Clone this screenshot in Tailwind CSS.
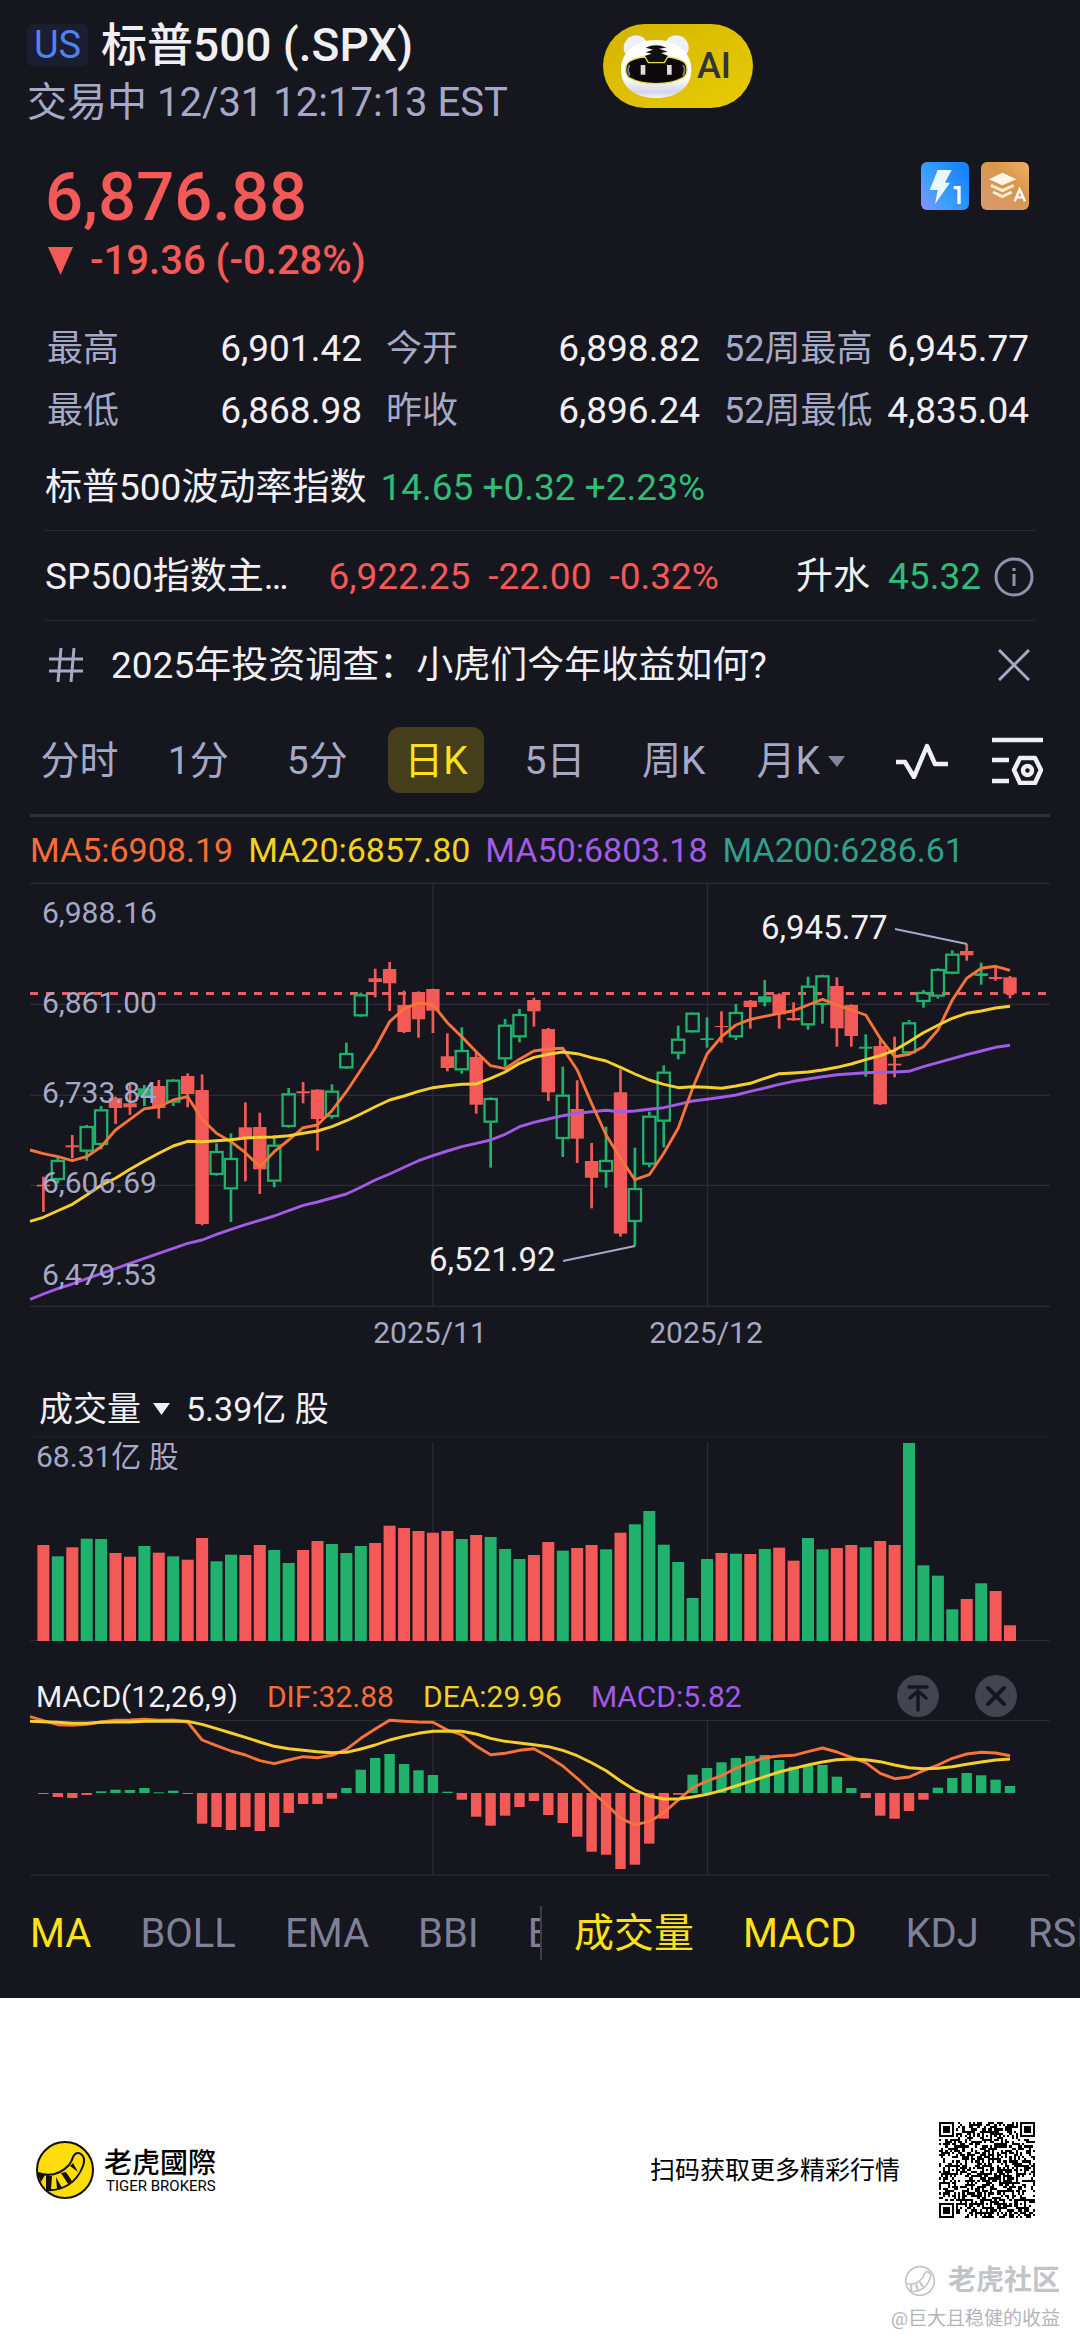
<!DOCTYPE html>
<html lang="zh-CN">
<head>
<meta charset="utf-8">
<meta name="viewport" content="width=device-width, initial-scale=1">
<title>标普500 (.SPX)</title>
<script src="https://cdn.jsdelivr.net/npm/@tailwindcss/browser@4"></script>
</head>
<body class="bg-white font-['Roboto','Noto_Sans_CJK_SC',sans-serif] text-[#f0f0f4]">
<main class="bg-[#16161e] overflow-hidden">

  <!-- Title bar -->
  <header class="grid grid-cols-[576fr_477fr] pt-[15px] pl-[27px]">
    <div>
      <h1 class="flex h-[60px] items-center gap-[13px] whitespace-nowrap text-[46px] font-medium">
        <span class="flex h-[42px] w-[61px] items-center justify-center rounded-md bg-[#1a1e30] text-[38px] font-normal text-[#4f82f0]">US</span>
        <span>标普500 (.SPX)</span>
      </h1>
      <p class="h-14 whitespace-nowrap text-[40px] leading-[56px] text-[#a6a9c6]">交易中 12/31 12:17:13 EST</p>
    </div>
    <button class="mt-[9px] flex h-[84px] w-[150px] items-center gap-1 rounded-full bg-gradient-to-br from-[#d3b400] to-[#e8cc06] pl-4 text-[36px] font-medium text-[#343434]">
      <svg class="h-[66px] w-[74px] shrink-0" viewBox="70 56 222 198" aria-hidden="true">
        <defs><linearGradient id="face" x1="0" y1="0" x2="0" y2="1"><stop offset=".65" stop-color="#fff"/><stop offset=".9" stop-color="#d4d5ea"/><stop offset="1" stop-color="#f4f4fb"/></linearGradient></defs>
        <circle cx="121" cy="100" r="37" fill="#eef0fa"/><circle cx="242" cy="100" r="37" fill="#eef0fa"/>
        <path d="M181 77C245 77 287 115 287 166C287 221 240 251 181 251S76 221 76 166C76 115 117 77 181 77Z" fill="url(#face)"/>
        <path d="M150 100Q180 86 212 100L190 103L216 112L196 116L218 125L206 145H158L146 125L168 118L150 114L172 106Z" fill="#111"/>
        <path d="M100 142Q125 128 148 128L158 145H206L216 128Q242 130 264 142Q274 150 274 166Q274 182 262 190Q230 208 181 208T100 190Q90 182 90 166Q90 150 100 142Z" fill="#0c0809" stroke="#e6dc50" stroke-width="4"/>
        <path d="M102 152Q92 166 102 184M262 152Q272 166 262 184" fill="none" stroke="#77738c" stroke-width="6"/>
        <path d="M135 152h14v29h-14zM214 152h14v29h-14z" fill="#dcdce2"/>
      </svg>
      AI
    </button>
  </header>

  <!-- Last price -->
  <section class="mt-[26px] flex justify-between pl-[45px] pr-[51px] text-[#f35a57]">
    <div>
      <p class="h-20 text-[67px] font-medium leading-[80px]">6,876.88</p>
      <p class="flex h-12 items-center gap-[17px] whitespace-nowrap text-[40px] font-medium">
        <svg class="ml-[3px] h-7 w-[25px]" viewBox="0 0 25 28" aria-hidden="true"><path d="M0 0H25L12.500 28Z" fill="#f35a57"/></svg>
        -19.36 (-0.28%)
      </p>
    </div>
    <div class="mt-[5px] flex gap-3">
      <svg class="size-12" viewBox="0 0 144 144" role="img" aria-label="Level 1">
        <defs><linearGradient id="lv" x1="0" y1="1" x2="1" y2=".3"><stop stop-color="#8a90ff"/><stop offset=".4" stop-color="#3fa0ff"/><stop offset="1" stop-color="#1684fb"/></linearGradient></defs>
        <rect width="144" height="144" rx="18" fill="url(#lv)"/>
        <path d="M50 24H92L72 62H87L42 126L50 84H26Z" fill="#e9f7ff"/>
        <path d="M98 72H119V126H109V82H98Z" fill="#fff"/>
      </svg>
      <svg class="size-12" viewBox="0 0 144 144" role="img" aria-label="Depth A">
        <defs><linearGradient id="dp" x1="0" y1="1" x2="1" y2="0"><stop stop-color="#d99a78"/><stop offset=".6" stop-color="#d8974c"/><stop offset="1" stop-color="#efb066"/></linearGradient></defs>
        <rect width="144" height="144" rx="18" fill="url(#dp)"/>
        <path d="M64 32L106 52L64 70L24 52Z" fill="#fff8ea"/>
        <path d="M30 70L64 86L98 70M36 90L64 104L92 90" fill="none" stroke="#fdebd0" stroke-width="9"/>
        <path d="M101 118L116 82L132 118M107 106H126" fill="none" stroke="#fff" stroke-width="7"/>
      </svg>
    </div>
  </section>

  <!-- Key figures -->
  <dl class="mt-[33px] grid grid-cols-[315fr_314fr_305fr] gap-x-6 whitespace-nowrap pl-[47px] pr-[51px] text-[37px] leading-[62px] [&_dt]:text-[36px] [&_dt]:text-[#a6a9c6] [&>div]:flex [&>div]:justify-between">
    <div><dt>最高</dt><dd>6,901.42</dd></div>
    <div><dt>今开</dt><dd>6,898.82</dd></div>
    <div><dt>52周最高</dt><dd>6,945.77</dd></div>
    <div><dt>最低</dt><dd>6,868.98</dd></div>
    <div><dt>昨收</dt><dd>6,896.24</dd></div>
    <div><dt>52周最低</dt><dd>4,835.04</dd></div>
  </dl>

  <!-- Related instruments -->
  <section class="mt-0.5 whitespace-nowrap px-[45px] text-[37px]">
    <div class="flex h-[86px] items-center gap-[14px] pt-0.5">
      <span>标普500波动率指数</span><span class="text-[#2fbd78]">14.65 +0.32 +2.23%</span>
    </div>
    <div class="flex h-[91px] items-center border-y border-[#2c2c36] pt-0.5">
      <span>SP500指数主…</span>
      <span class="ml-10 flex gap-[18px] text-[#f35a57]"><span>6,922.25</span><span>-22.00</span><span>-0.32%</span></span>
      <span class="ml-auto">升水</span>
      <span class="ml-[18px] text-[#2fbd78]">45.32</span>
      <button class="ml-[13px] mr-px" aria-label="说明">
        <svg class="size-10" viewBox="0 0 40 40" fill="none" stroke="#8f92ac" stroke-width="3"><circle cx="20" cy="20" r="18"/><path d="M20 17V29M20 11V14"/></svg>
      </button>
    </div>
    <div class="flex h-[88px] items-center">
      <svg class="ml-1 size-[34px]" viewBox="0 0 34 34" fill="none" stroke="#a6a9c6" stroke-width="3" aria-hidden="true"><path d="M0 11H34M0 23H34M12 0L9 34M25 0L22 34"/></svg>
      <a href="#" class="ml-[28px] pt-0.5">2025年投资调查：小虎们今年收益如何?</a>
      <button class="ml-auto mr-[5px]" aria-label="关闭">
        <svg class="size-8" viewBox="0 0 32 32" fill="none" stroke="#a6a9c6" stroke-width="3"><path d="M1 1L31 31M31 1L1 31"/></svg>
      </button>
    </div>
  </section>

  <!-- Period tabs -->
  <nav class="mt-[18px] grid grid-cols-[repeat(7,119fr)_140fr_50fr] justify-items-center whitespace-nowrap pl-5 pr-[37px] text-[39px] text-[#a6a9c6] [&>button]:h-[66px] [&>button]:pt-0.5">
    <button>分时</button>
    <button>1分</button>
    <button>5分</button>
    <button class="w-24 rounded-xl bg-[#453e1b] text-[#ffe11a]">日K</button>
    <button>5日</button>
    <button>周K</button>
    <button class="flex items-center gap-2 pl-4">月K<svg class="h-[11px] w-[17px]" viewBox="0 0 17 11" aria-hidden="true"><path d="M0 0H17L9 11Z" fill="#84869c"/></svg></button>
    <button class="flex items-center" aria-label="分析"><svg class="h-9 w-[54px]" viewBox="0 0 54 36" fill="none" stroke="#f0f0f4" stroke-width="4.500" stroke-linejoin="round"><path d="M1 19H10L19 34L32 3L40 21H53"/></svg></button>
    <button class="flex items-center" aria-label="图表设置"><svg class="h-12 w-[51px]" viewBox="0 0 51 48" fill="none" stroke="#f0f0f4" stroke-width="4.500"><path d="M0 3H51M0 23H17M0 44H17"/><path d="M28 21H43L49 33L43 46H28L22 33Z" stroke-linejoin="round"/><circle cx="35.500" cy="33.500" r="4.500"/></svg></button>
  </nav>
  <hr class="mx-[30px] mt-[21px] border-t-3 border-[#303036]">

  <p class="flex h-[65px] items-center gap-[15px] whitespace-nowrap pl-[30px] pt-px text-[34px]">
    <span class="text-[#f66d36]">MA5:6908.19</span><span class="text-[#f2d21f]">MA20:6857.80</span><span class="text-[#a35ae6]">MA50:6803.18</span><span class="text-[#2fa08a]">MA200:6286.61</span>
  </p>

  <!-- Price chart -->
  <svg id="price" class="block w-full" viewBox="0 12 1080 468" role="img" aria-label="日K线"></svg>

  <!-- Volume -->
  <div class="mt-[30px] flex h-14 items-center whitespace-nowrap pl-[39px] pt-0.5 text-[34px]">
    <button class="flex items-center gap-3">成交量<svg class="h-3 w-[17px]" viewBox="0 0 17 12" aria-hidden="true"><path d="M0 0H17L8.500 12Z" fill="#f0f0f4"/></svg></button>
    <span class="ml-4">5.39亿 股</span>
  </div>
  <svg id="volume" class="block w-full" viewBox="0 56 1080 208" role="img" aria-label="成交量"></svg>

  <!-- MACD -->
  <div class="mt-[30px] flex h-11 items-center gap-[29px] whitespace-nowrap pl-[36px] pr-[63px] text-[30px]">
    <span>MACD(12,26,9)</span><span class="text-[#f66d36]">DIF:32.88</span><span class="text-[#f2d21f]">DEA:29.96</span><span class="text-[#a35ae6]">MACD:5.82</span>
    <button class="ml-auto" aria-label="上移"><svg class="size-[42px]" viewBox="0 0 42 42"><circle cx="21" cy="21" r="21" fill="#424450"/><path d="M12 12H30M21 35V17M13 23L21 16L29 23" fill="none" stroke="#16161e" stroke-width="3.500" stroke-linecap="round"/></svg></button>
    <button class="ml-[7px]" aria-label="移除"><svg class="size-[42px]" viewBox="0 0 42 42"><circle cx="21" cy="21" r="21" fill="#424450"/><path d="M13 13L29 29M29 13L13 29" fill="none" stroke="#16161e" stroke-width="4" stroke-linecap="round"/></svg></button>
  </div>
  <svg id="macd" class="block w-full overflow-visible" viewBox="0 338 1080 162" role="img" aria-label="MACD"></svg>

  <!-- Indicator tabs -->
  <nav class="mb-3 flex h-[106px] items-center text-[40px] text-[#7f8199]">
    <div class="flex w-1/2 shrink-0 gap-[49px] overflow-hidden whitespace-nowrap pl-[30px] pt-0.5">
      <button class="text-[#ffe11a]">MA</button><button>BOLL</button><button>EMA</button><button>BBI</button><button>E</button>
    </div>
    <div class="h-[54px] w-0.5 shrink-0 bg-[#3c3d4a]"></div>
    <div class="flex flex-1 gap-[49px] overflow-hidden whitespace-nowrap pl-8 pt-0.5">
      <button class="text-[#ffe11a]">成交量</button><button class="text-[#ffe11a]">MACD</button><button>KDJ</button><button>RSI</button>
    </div>
  </nav>
</main>

<footer class="pt-[124px] pb-[9px] text-black">
  <div class="flex h-24 items-center pl-[36px] pr-[45px]">
    <svg class="size-[58px]" viewBox="0 0 58 58" aria-hidden="true">
      <circle cx="29" cy="29" r="28" fill="#ffdd0a" stroke="#111" stroke-width="2"/>
      <path d="M2 32Q20 38 33 24Q36 20 37 16Q40 10 45 13Q50 17 47 25Q42 38 32 44Q22 50 10 49" fill="#ffdd0a" stroke="#111" stroke-width="2"/>
      <path d="M1 32L9 34L5 41ZM10 34L16 35L15 49H10ZM20 36L26 47L21 48ZM25 32L30 31L36 40L32 43ZM34 25L37 22L42 31Z" fill="#111"/>
    </svg>
    <div class="ml-2.5 whitespace-nowrap">
      <p class="font-['Noto_Sans_CJK_TC',sans-serif] text-[28px] font-medium leading-8">老虎國際</p>
      <p class="pl-0.5 text-[15px] leading-[18px]">TIGER BROKERS</p>
    </div>
    <p class="ml-auto whitespace-nowrap pt-0.5 text-[25px]">扫码获取更多精彩行情</p>
    <svg id="qr" class="ml-[39px] size-24" viewBox="0 0 45 45" shape-rendering="crispEdges" role="img" aria-label="二维码"></svg>
  </div>
  <div class="mt-[43px] flex flex-col items-end whitespace-nowrap pr-5 text-[#c3c4ca]">
    <p class="flex h-10 items-center gap-3 text-[28px] font-bold">
      <svg class="size-8" viewBox="0 0 58 58" fill="none" stroke="#c3c4ca" stroke-width="3" aria-hidden="true"><circle cx="29" cy="29" r="26"/><path d="M4 33Q20 39 33 24Q36 20 37 16Q40 10 45 13Q50 17 47 25Q42 38 32 44Q22 50 10 47"/><path d="M13 36V46M22 35L25 45M29 31L34 40" stroke-width="4"/></svg>
      老虎社区
    </p>
    <p class="mt-[3px] h-[30px] text-[19px] leading-[30px] text-[#b4b5bc]">@巨大且稳健的收益</p>
  </div>
</footer>

<script>
const RED = '#f35a57', GREEN = '#20b26c', GRID = '#2b2c34', MUTED = '#a6a9c6';
const STEP = 14.427, X0 = 43.4, THIRD = 3;
const cx = i => X0 + i * STEP;
const y = v => v / THIRD;
const rect = (x, t, w, h, f) => `<rect x="${x.toFixed(1)}" y="${t.toFixed(1)}" width="${w}" height="${Math.max(h, 1).toFixed(1)}" fill="${f}"/>`;
const line = (x1, y1, x2, y2, c, w = 1, extra = '') => `<line x1="${x1}" y1="${y1}" x2="${x2}" y2="${y2}" stroke="${c}" stroke-width="${w}" ${extra}/>`;
const curve = (vals, c) => `<polyline fill="none" stroke="${c}" stroke-width="2.9" stroke-linejoin="round" points="${vals.map((v, i) => (i ? cx(i - 1) : 30).toFixed(1) + ',' + y(v).toFixed(1)).join(' ')}"/>`;
const label = (x, b, t, size, c, anchor = 'start') => `<text x="${x}" y="${b}" font-size="${size}" fill="${c}" text-anchor="${anchor}">${t}</text>`;
const MONTHS = [433, 707.5];

// colour, high, body top, body bottom, low, volume top
const days = `R 920 944 949 1026 495|G 862 870 930 940 529|R 795 826 832 865 502|G 765 768 845 872 476|G 708 718 825 838 477|R 680 684 714 762 519|R 640 700 712 735 530|G 645 655 680 708 498|R 630 648 714 746 518|G 627 629 698 708 529|R 610 618 672 712 539|R 613 660 1062 1066 474|G 820 843 915 917 544|G 790 864 958 1056 524|R 697 772 804 934 525|R 728 771 898 972 495|G 795 824 935 952 510|G 654 670 771 773 549|R 636 664 670 700 510|R 658 659 747 842 483|G 643 662 741 746 492|G 518 549 595 597 519|G 368 373 439 441 498|R 296 325 336 382 489|R 276 297 340 423 437|R 362 405 486 489 444|R 364 366 448 503 453|R 356 357 422 489 458|R 490 559 594 604 453|G 472 540 601 611 477|R 545 561 704 731 465|G 682 684 758 893 471|G 447 464 568 590 507|G 417 432 502 517 537|R 383 390 424 470 525|R 474 477 667 693 486|G 590 674 807 861 512|R 631 717 806 879 504|R 819 873 923 1015 495|G 770 870 906 953 508|R 598 667 1091 1100 458|G 833 954 1056 1127 433|G 725 737 884 892 393|G 586 605 755 832 494|G 467 506 551 568 546|G 427 428 487 488 654|G 442 505 510 533 537|R 424 468 471 518 519|G 402 426 502 510 521|R 390 392 411 476 522|G 330 379 397 409 507|R 370 373 433 476 503|R 397 444 451 452 542|G 320 347 466 479 474|G 314 316 405 461 508|R 322 348 475 530 504|R 403 405 498 530 495|G 493 530 536 620 502|R 510 528 703 705 483|R 500 581 586 622 495|G 450 457 550 552 189|G 360 366 396 413 556|G 295 297 380 386 587|G 241 251 311 313 688|R 222 243 256 272 657|G 278 310 318 344 610|R 293 321 327 332 633|R 318 322 371 385 736`
  .split('|').map(s => { const p = s.split(' '); return [p[0], ...p.slice(1).map(Number)]; });

const ma5 = [840,851,860,872,860,830,780,748,716,710,690,680,748,790,815,848,890,845,810,773,765,722,665,600,535,455,416,399,404,458,500,545,587,596,568,543,537,535,600,700,795,865,929,914,850,775,655,552,500,465,448,439,430,422,405,388,405,420,435,505,560,553,530,480,390,325,295,289,301];
const ma20 = [1054,1042,1022,1003,975,946,925,898,873,850,828,814,815,812,809,804,802,801,797,790,783,770,752,732,710,690,678,664,653,647,643,642,625,606,580,562,553,546,551,563,573,592,612,630,643,653,650,652,655,648,640,625,611,609,606,600,592,582,569,557,541,515,488,466,445,430,423,414,409];
const ma50 = [1288,1272,1256,1242,1226,1211,1196,1180,1165,1150,1135,1120,1110,1093,1078,1064,1051,1038,1022,1006,996,984,972,952,930,912,892,872,857,843,830,820,810,793,770,757,747,737,730,725,721,725,723,718,713,703,693,688,682,675,664,654,643,634,627,620,614,611,608,607,606,604,590,578,566,554,543,532,526];

let s = '';
for (const v of [40, 403, 676, 946, 1309]) s += line(30, y(v), 1050, y(v), GRID, 1.3);
for (const x of MONTHS) s += line(x, y(40), x, y(1309), GRID, 1.3);
s += line(30, 123.5, 1047, 123.5, '#e8605f', 2.8, 'stroke-dasharray="8 8"');
days.forEach(([c, h, t, b, l], i) => {
  const x = cx(i), col = c === 'R' ? RED : GREEN;
  if (c === 'R' || b - t < 28) {
    s += line(x, y(h), x, y(l), col, 2.7) + rect(x - 6.7, y(t), 13.4, y(b - t), col);
  } else {
    s += line(x, y(h), x, y(t), col, 2.7) + line(x, y(b), x, y(l), col, 2.7);
    s += `<rect x="${x - 6.1}" y="${y(t) + 1}" width="12.2" height="${y(b - t) - 2}" fill="none" stroke="${col}" stroke-width="2.3"/>`;
  }
});
s += curve(ma50, '#a35ae6') + curve(ma5, '#f6733a') + curve(ma20, '#f5cf2c');
[['6,988.16', 158], ['6,861.00', 429], ['6,733.84', 700], ['6,606.69', 970], ['6,479.53', 1244]].forEach(([t, v]) => s += label(42, y(v), t, 30, MUTED));
s += line(895, 59, 967, 74, MUTED, 2) + label(761, 69, '6,945.77', 33, '#f0f0f4');
s += line(563, 391, 635, 376, MUTED, 2) + label(429, 401, '6,521.92', 33, '#f0f0f4');
s += label(430, 472.5, '2025/11', 30, MUTED, 'middle') + label(706, 472.5, '2025/12', 30, MUTED, 'middle');
document.getElementById('price').innerHTML = s;

s = line(30, 57, 1050, 57, '#202129') + line(30, 260.5, 1050, 260.5, GRID);
for (const x of MONTHS) s += line(x, 62, x, 260, GRID, 1.3);
days.forEach((d, i) => s += rect(cx(i) - 6, y(d[5]), 12, y(783 - d[5]), d[0] === 'R' ? RED : GREEN));
s += label(36, 87, '68.31亿 股', 30, MUTED);
document.getElementById('volume').innerHTML = s;

const hist = [1242,1251,1254,1245,1234,1229,1230,1224,1237,1232,1241,1331,1341,1350,1341,1353,1341,1299,1272,1272,1256,1224,1169,1134,1122,1152,1171,1185,1235,1259,1310,1337,1307,1281,1263,1305,1329,1370,1415,1424,1467,1454,1391,1316,1244,1184,1164,1147,1134,1128,1125,1140,1160,1158,1155,1190,1224,1254,1307,1316,1293,1259,1223,1194,1179,1186,1199,1218];
const dif = [1010,1022,1034,1036,1033,1026,1021,1020,1018,1021,1020,1026,1080,1097,1113,1125,1142,1151,1140,1130,1133,1126,1108,1075,1047,1021,1024,1026,1027,1050,1065,1098,1124,1120,1111,1106,1130,1158,1195,1235,1272,1315,1334,1325,1298,1260,1223,1203,1187,1165,1148,1133,1128,1126,1115,1104,1116,1132,1148,1180,1196,1191,1172,1155,1135,1122,1117,1119,1127];
const dea = [1024,1025,1027,1030,1030,1027,1026,1026,1024,1024,1024,1024,1033,1046,1059,1072,1086,1099,1106,1111,1115,1118,1117,1107,1095,1080,1069,1060,1054,1053,1054,1062,1075,1084,1089,1094,1100,1111,1127,1148,1172,1203,1230,1248,1257,1257,1251,1243,1232,1218,1204,1190,1176,1165,1155,1146,1139,1137,1139,1145,1155,1163,1166,1165,1160,1153,1146,1140,1137];
s = line(30, 340.5, 1050, 340.5, GRID) + line(30, 495, 1050, 495, GRID);
for (const x of MONTHS) s += line(x, 340, x, 495, GRID, 1.3);
hist.forEach((v, i) => s += rect(cx(i) - 5.2, y(Math.min(v, 1239)), 10.4, y(Math.abs(v - 1239)), v > 1239 ? RED : GREEN));
s += curve(dif, '#f6733a') + curve(dea, '#f5cf2c');
document.getElementById('macd').innerHTML = s;

// Version 7 code: 45 modules a side
const N = 45, finders = [[0, 0], [N - 7, 0], [0, N - 7]], marks = [[22, 6], [6, 22], [22, 22], [38, 22], [22, 38], [38, 38]];
let seed = 20251231, cells = '';
const rnd = () => (seed = (seed * 1103515245 + 12345) % 2147483648) / 2147483648;
for (let r = 0; r < N; r++) for (let c = 0; c < N; c++) {
  let on = rnd() < 0.5;
  if (r === 6 || c === 6) on = (r + c) % 2 === 0;
  for (const [fx, fy] of finders) {
    const d = Math.max(Math.abs(c - fx - 3), Math.abs(r - fy - 3));
    if (d <= 4) on = d !== 4 && d !== 2;
  }
  for (const [mx, my] of marks) {
    const d = Math.max(Math.abs(c - mx), Math.abs(r - my));
    if (d <= 2) on = d !== 1;
  }
  if (on) cells += `M${c} ${r}h1v1h-1z`;
}
document.getElementById('qr').innerHTML = `<path d="${cells}" fill="#000"/>`;
</script>
</body>
</html>
